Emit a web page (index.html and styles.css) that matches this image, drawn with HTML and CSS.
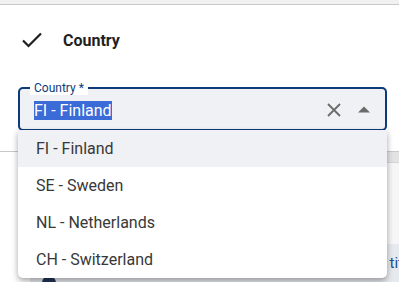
FILE: index.html
```html
<!DOCTYPE html>
<html lang="en">

<head>
  <meta charset="UTF-8" />
  <meta name="viewport" content="width=device-width, initial-scale=1" />
  <title>Country</title>
  <link rel="stylesheet" href="styles.css">
</head>

<body>

  <div class="topbar"></div>

  <div class="step">
    <svg class="check" width="22" height="16" viewBox="0 0 22 16">
      <path d="M2 8.5 L7.5 14 L20 1.5" fill="none" stroke="#1f1f1f" stroke-width="2.2" />
    </svg>
    <span class="stepTitle">Country</span>
  </div>

  <div class="fieldWrap">
    <fieldset class="field">
      <legend>Country *</legend>
      <div class="value"><span class="selected">FI - Finland</span></div>
      <svg class="clear" width="16" height="16" viewBox="0 0 16 16">
        <path d="M2 2 L14 14 M14 2 L2 14" stroke="#6b6b6b" stroke-width="1.8" />
      </svg>
      <svg class="caret" width="12" height="7" viewBox="0 0 12 7">
        <path d="M0 6.5 L6 0.5 L12 6.5 Z" fill="#6b6b6b" />
      </svg>
    </fieldset>

    <!-- open options list -->
    <ul class="menu">
      <li class="active">FI - Finland</li>
      <li>SE - Sweden</li>
      <li>NL - Netherlands</li>
      <li>CH - Switzerland</li>
    </ul>
  </div>

  <div class="under">
    <div class="tableHead"></div>
    <div class="tableBody"></div>
    <div class="tableRow">
      <span class="dot"></span>
      <span class="rowText">tit</span>
    </div>
  </div>

</body>

</html>
```

FILE: styles.css
```css
* {
  margin: 0;
  padding: 0;
  box-sizing: border-box;
  font-family: Roboto, "Noto Sans", Arial, sans-serif;
}

body {
  background-color: #fff;
  width: 399px;
  height: 282px;
  overflow: hidden;
}

.topbar {
  height: 5px;
  background-color: #f1f1f1;
  border-bottom: 1px solid #c9c9c9;
}

.step {
  display: flex;
  align-items: center;
  height: 38px;
  margin-top: 16px;
  padding-left: 21px;
}

.check {
  display: block;
}

.stepTitle {
  margin-left: 20px;
  font-size: 16px;
  font-weight: 700;
  color: #1f1f1f;
}

.fieldWrap {
  position: relative;
  margin: 28px 12px 0 18px;
  z-index: 2;
}

.field {
  display: flex;
  align-items: center;
  border: 2px solid #0d3a78;
  border-radius: 5px;
  background-color: #f0f1f5;
  padding: 0 14px 4px 14px;
  position: relative;
  top: -6px;
  margin-bottom: -6px;
  height: 50px;
}

legend {
  font-size: 12px;
  color: #0d3a78;
  padding: 0 4px;
  margin-left: -4px;
  background-color: #fff;
  line-height: 14px;
}

.value {
  flex: 1;
  font-size: 16px;
  line-height: 19px;
}

.selected {
  background-color: #3b6bd6;
  color: #fff;
}

.clear {
  margin-right: 16px;
  display: block;
}

.caret {
  display: block;
  margin-right: 1px;
  margin-top: -2px;
}

.menu {
  list-style: none;
  position: absolute;
  left: 0;
  right: 0;
  top: 43px;
  background-color: #fff;
  border-radius: 0 0 5px 5px;
  box-shadow: 0 3px 6px rgba(0, 0, 0, 0.35);
  overflow: hidden;
}

.menu li {
  height: 37px;
  line-height: 37px;
  padding-left: 18px;
  font-size: 16px;
  color: #383838;
}

.menu li.active {
  background-color: #f0f1f5;
}

.under {
  margin-top: 20px;
  border-top: 1px solid #c9c9c9;
}

.tableHead {
  height: 11px;
  margin-left: 30px;
  background-color: #e3e3e3;
  border-bottom: 1px solid #d5d5d5;
}

.tableBody {
  height: 81px;
  margin-left: 30px;
  background-color: #f6f6f6;
}

.tableRow {
  display: flex;
  align-items: flex-end;
  height: 40px;
  margin-left: 30px;
  background-color: #e6e9ee;
}

.dot {
  width: 14px;
  height: 14px;
  border-radius: 50%;
  background-color: #1f3557;
  margin-left: 12px;
  margin-bottom: -6px;
}

.rowText {
  margin-left: auto;
  font-size: 15px;
  color: #1c4f94;
  margin-right: -4px;
  margin-bottom: 12px;
}
```
